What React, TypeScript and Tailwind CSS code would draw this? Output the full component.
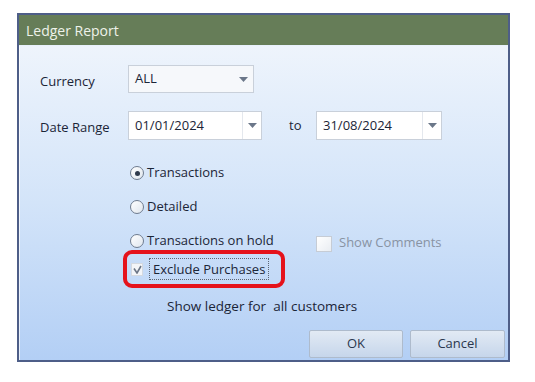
const font = { fontFamily: '"Open Sans", "Noto Sans", Arial, sans-serif' }

function Arrow() {
  return (
    <svg width="9" height="5" viewBox="0 0 9 5">
      <path d="M0 0h9L4.5 5z" fill="#6b7789" />
    </svg>
  )
}

function Combo({ value, width, split }: { value: string; width: string; split?: boolean }) {
  return (
    <div
      className={`flex h-full items-center border border-[#c9d0da] ${split ? 'bg-white' : 'bg-[#f6f8fb]'} ${width}`}
    >
      <span className="flex-1 pl-[6px] text-[13px] text-[#1b2537]">{value}</span>
      <span
        className={`flex h-full w-[19px] items-center justify-center ${split ? 'border-l border-[#e4e8ee]' : ''}`}
      >
        <Arrow />
      </span>
    </div>
  )
}

function Radio({ checked, label }: { checked?: boolean; label: string }) {
  return (
    <div className="flex h-[18px] items-center">
      <span className="flex h-[14px] w-[14px] items-center justify-center rounded-full border border-[#6f7c8f] bg-gradient-to-br from-[#ffffff] to-[#dfe6ee]">
        {checked && <span className="h-[5px] w-[5px] rounded-full bg-[#2f3a4c]" />}
      </span>
      <span className="ml-[3px] text-[13px] text-[#1b2537]">{label}</span>
    </div>
  )
}

export default function App() {
  return (
    <div className="h-[382px] w-[535px] bg-white pl-[17px] pt-[13px]" style={font}>
      <div className="flex h-[349px] w-[493px] flex-col border-2 border-[#4e5e88]">
        <div className="flex h-[30px] items-center bg-[#667d58] pl-[7px]">
          <span className="text-[14px] text-[#eef2ea]">Ledger Report</span>
        </div>

        <div className="flex flex-1 flex-col border-t border-l border-white/70 bg-gradient-to-b from-[#eef4fc] via-[#d3e4f9] to-[#b3cff5] pt-[19px] pr-[3px] pl-[20px]">
          <div className="flex h-[28px] items-center">
            <span className="w-[88px] translate-y-[3px] text-[13px] text-[#1b2537]">Currency</span>
            <Combo value="ALL" width="w-[126px]" />
          </div>

          <div className="mt-[18px] flex h-[29px] items-center">
            <span className="w-[88px] translate-y-[2px] text-[13px] text-[#1b2537]">Date Range</span>
            <Combo value="01/01/2024" width="w-[134px]" split />
            <span className="ml-[27px] w-[27px] text-[13px] text-[#1b2537]">to</span>
            <Combo value="31/08/2024" width="w-[126px]" split />
          </div>

          <div className="mt-[24px] ml-[90px] flex flex-col gap-[16px]">
            <Radio checked label="Transactions" />
            <Radio label="Detailed" />
            <div className="flex h-[18px] items-center">
              <div className="w-[186px]">
                <Radio label="Transactions on hold" />
              </div>
              <span className="h-[16px] w-[16px] translate-y-[3px] border border-[#c6ccd5] bg-gradient-to-br from-[#ffffff] to-[#e9edf2]" />
              <span className="ml-[7px] translate-y-[2px] text-[13px] text-[#8893a3]">Show Comments</span>
            </div>
          </div>

          <div className="ml-[83px] flex h-[38px] w-[162px] items-center rounded-[9px] border-[4px] border-[#e5121b] pl-[4px]">
            <span className="flex h-[13px] w-[12px] items-center justify-center border border-[#d4d9e0] bg-[#f3f5f8]">
              <svg width="9" height="9" viewBox="0 0 9 9">
                <path d="M1 3.5L4 8L8 1" fill="none" stroke="#6c7686" strokeWidth="1.6" />
              </svg>
            </span>
            <span className="ml-[6px] border border-dotted border-[#5d6675] px-[3px] text-[13px] leading-[20px] text-[#1b2537]">
              Exclude Purchases
            </span>
          </div>

          <div className="mt-[9px] ml-[127px] h-[18px] text-[13.5px] leading-[18px] text-[#1b2537]">
            Show ledger for&nbsp;&nbsp;all customers
          </div>

          <div className="mt-[15px] flex justify-end gap-[7px]">
            <button className="h-[28px] w-[94px] rounded-[2px] border border-[#aebbcc] bg-gradient-to-b from-[#e2eaf4] to-[#c6d6eb] text-[13px] text-[#2a374d]">
              OK
            </button>
            <button className="h-[28px] w-[95px] rounded-[2px] border border-[#aebbcc] bg-gradient-to-b from-[#e2eaf4] to-[#c6d6eb] text-[13px] text-[#2a374d]">
              Cancel
            </button>
          </div>
        </div>
      </div>
    </div>
  )
}
